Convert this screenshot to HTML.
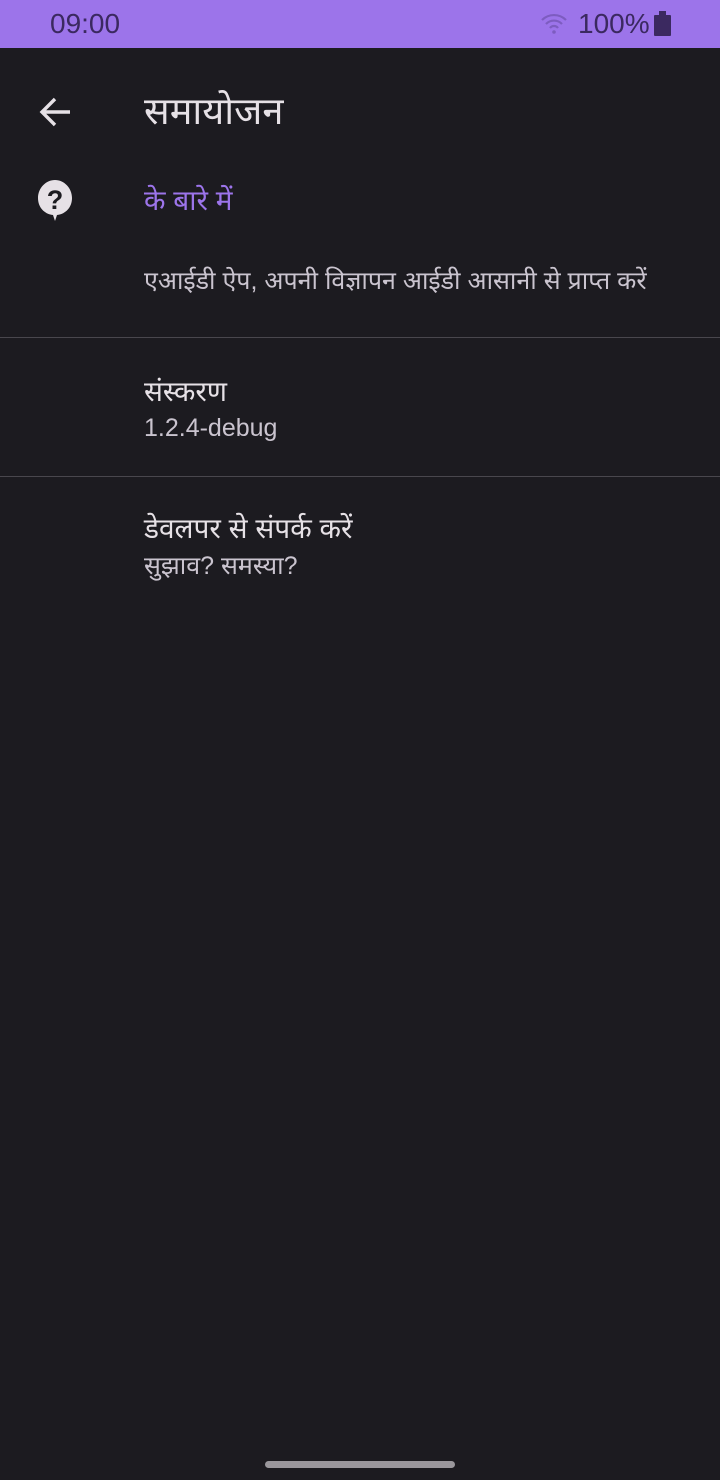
<!DOCTYPE html>
<html><head><meta charset="utf-8"><style>
body{margin:0;width:720px;height:1480px;background:#1c1b20;font-family:"Liberation Sans","Noto Sans Devanagari","Lohit Devanagari",sans-serif;overflow:hidden;position:relative;color:#e6e1e6}
.sb{position:absolute;top:0;left:0;width:720px;height:48px;background:#9c74ea;color:#3b2960;font-size:28px}
.a{position:absolute;white-space:nowrap}
.hr{position:absolute;left:0;width:720px;height:1px;background:#49474d}
</style></head><body>
<div class="sb"><span class="a" style="left:50px;top:8px">09:00</span>
<svg class="a" style="left:540px;top:12px" width="28" height="22" viewBox="0 0 28 22"><path d="M2 8a17 17 0 0 1 24 0M6 12a11 11 0 0 1 16 0M10 16a5 5 0 0 1 8 0" stroke="#7d5cc0" stroke-width="2.2" fill="none"/><circle cx="14" cy="20" r="1.8" fill="#7d5cc0"/></svg>
<span class="a" style="left:578px;top:8px">100%</span>
<div class="a" style="left:654px;top:15px;width:17px;height:21px;background:#3b2960;border-radius:1px"></div><div class="a" style="left:659px;top:11px;width:7px;height:4px;background:#3b2960"></div></div>
<svg class="a" style="left:38px;top:94px" width="36" height="36" viewBox="0 0 36 36"><path d="M32 18H6M17 5L4 18l13 13" stroke="#e6e1e6" stroke-width="3.4" fill="none"/></svg>
<div class="a" style="left:144px;top:90px;font-size:38px;color:#e6e1e6">समायोजन</div>
<svg class="a" style="left:37px;top:179px" width="36" height="44" viewBox="0 0 36 44"><path d="M18 1C9 1 1 9 1 19c0 9 6 16 15 17l2 6 2-6c9-1 15-8 15-17C35 9 27 1 18 1z" fill="#e6e1e6"/><text x="18" y="30" text-anchor="middle" font-family="Liberation Sans" font-weight="bold" font-size="27" fill="#1c1b20">?</text></svg>
<div class="a" style="left:144px;top:185px;font-size:28px;color:#9c74ea">के बारे में</div>
<div class="a" style="left:144px;top:267px;font-size:25px;color:#cac4cf">एआईडी ऐप, अपनी विज्ञापन आईडी आसानी से प्राप्त करें</div>
<div class="hr" style="top:337px"></div>
<div class="a" style="left:144px;top:376px;font-size:28px">संस्करण</div>
<div class="a" style="left:144px;top:414px;font-size:25px;color:#cac4cf">1.2.4-debug</div>
<div class="hr" style="top:476px"></div>
<div class="a" style="left:144px;top:513px;font-size:28px">डेवलपर से संपर्क करें</div>
<div class="a" style="left:144px;top:552px;font-size:25px;color:#cac4cf">सुझाव? समस्या?</div>
<div class="a" style="left:265px;top:1461px;width:190px;height:7px;border-radius:4px;background:#9a979c"></div>
</body></html>
